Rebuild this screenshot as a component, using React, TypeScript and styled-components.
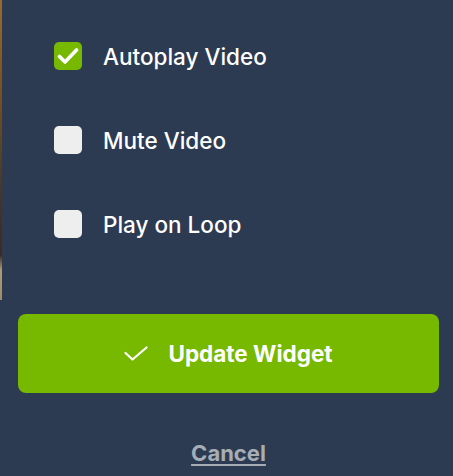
import { useState } from "react"
import styled, { createGlobalStyle } from "styled-components"

const GlobalStyle = createGlobalStyle`
  html, body {
    margin: 0;
    padding: 0;
    background-color: #2c3b51;
  }
  body {
    font-family: Inter, "Noto Sans", sans-serif;
    -webkit-font-smoothing: antialiased;
  }
`

const Page = styled.div`
  position: relative;
  width: 453px;
  height: 476px;
  overflow: hidden;
  background-color: #2c3b51;
`

// sliver of the page behind the panel, visible on the left edge
const BehindStrip = styled.div`
  position: absolute;
  left: 0;
  top: 0;
  width: 2px;
  height: 300px;
  background: linear-gradient(
    to bottom,
    #9a6a2a 0%,
    #7a5220 30%,
    #4a3a2a 60%,
    #3a2a24 85%,
    #b09a78 90%,
    #a08a68 100%
  );
`

const Panel = styled.div`
  display: flex;
  flex-direction: column;
  width: 421px;
  padding: 42px 0 0 18px;
`

const Options = styled.div`
  display: flex;
  flex-direction: column;
  gap: 56px;
  padding-left: 36px;
`

const OptionRow = styled.label`
  display: flex;
  align-items: center;
  gap: 21px;
  height: 28px;
  cursor: pointer;
`

const Box = styled.span<{ checked: boolean }>`
  width: 28px;
  height: 28px;
  border-radius: 5px;
  flex-shrink: 0;
  display: flex;
  align-items: center;
  justify-content: center;
  background-color: ${({ checked }) => (checked ? "#76b900" : "#eeeeee")};
`

const OptionText = styled.span`
  color: #ffffff;
  font-size: 22.5px;
  font-weight: 500;
`

const UpdateButton = styled.button`
  margin-top: 76px;
  height: 79px;
  width: 421px;
  border: none;
  border-radius: 8px;
  background-color: #76b900;
  color: #ffffff;
  font-family: Inter, "Noto Sans", sans-serif;
  font-size: 22.5px;
  font-weight: 700;
  display: flex;
  align-items: center;
  justify-content: center;
  gap: 20px;
  cursor: pointer;
  padding: 0;
`

const CancelLink = styled.a`
  align-self: center;
  margin-top: 47px;
  color: #a7adb5;
  font-size: 22px;
  font-weight: 700;
  text-decoration: underline;
  text-decoration-thickness: 2px;
  text-underline-offset: 3px;
  cursor: pointer;
`

const options = ["Autoplay Video", "Mute Video", "Play on Loop"]

function BoxCheck() {
  return (
    <svg width={22} height={18} viewBox="0 0 22 18" fill="none">
      <path
        d="M2.5 9.5 L8 15 L19.5 3"
        stroke="#ffffff"
        strokeWidth={3.6}
        strokeLinecap="round"
        strokeLinejoin="round"
      />
    </svg>
  )
}

function ButtonCheck() {
  return (
    <svg width={24} height={15} viewBox="0 0 24 15" fill="none">
      <path
        d="M1.5 7 L8.5 13.5 L22.5 1.5"
        stroke="#ffffff"
        strokeWidth={2.2}
        strokeLinecap="round"
        strokeLinejoin="round"
      />
    </svg>
  )
}

export default function App() {
  const [checked, setChecked] = useState<boolean[]>([true, false, false])

  const toggle = (index: number) =>
    setChecked((prev) => prev.map((v, i) => (i === index ? !v : v)))

  return (
    <Page>
      <GlobalStyle />
      <BehindStrip />
      <Panel>
        <Options>
          {options.map((label, i) => (
            <OptionRow key={label} onClick={() => toggle(i)}>
              <Box checked={checked[i]}>{checked[i] && <BoxCheck />}</Box>
              <OptionText>{label}</OptionText>
            </OptionRow>
          ))}
        </Options>

        <UpdateButton>
          <ButtonCheck />
          Update Widget
        </UpdateButton>

        <CancelLink>Cancel</CancelLink>
      </Panel>
    </Page>
  )
}
